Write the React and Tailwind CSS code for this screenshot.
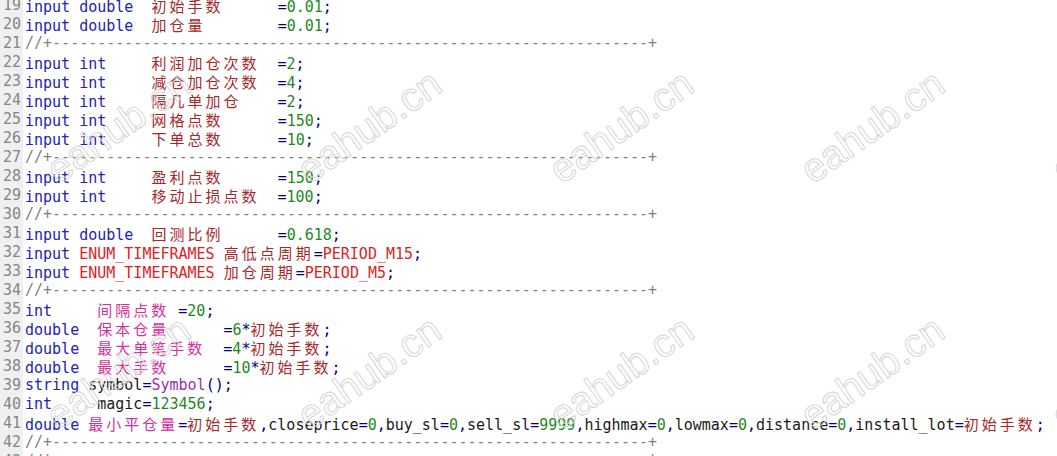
import React from 'react';

// token colours of the MetaEditor scheme
const C = {
  kw: 'text-[#2323b5]',
  op: 'text-[#000080]',
  num: 'text-[#1e8a1e]',
  vr: 'text-[#a8282a]',
  mg: 'text-[#d62fa0]',
  en: 'text-[#e01e1e]',
  fn: 'text-[#9a2fb2]',
  id: 'text-[#1a1a1a]',
  cm: 'text-[#808080]',
};

const SEP = ['cm', '//+' + '-'.repeat(66) + '+'];

const lines = [
  [19, [['kw', 'input'], ['id', ' '], ['kw', 'double'], ['id', '  '], ['vr', '初始手数'], ['id', '      '], ['op', '='], ['num', '0.01'], ['op', ';']]],
  [20, [['kw', 'input'], ['id', ' '], ['kw', 'double'], ['id', '  '], ['vr', '加仓量'], ['id', '        '], ['op', '='], ['num', '0.01'], ['op', ';']]],
  [21, [SEP]],
  [22, [['kw', 'input'], ['id', ' '], ['kw', 'int'], ['id', '     '], ['vr', '利润加仓次数'], ['id', '  '], ['op', '='], ['num', '2'], ['op', ';']]],
  [23, [['kw', 'input'], ['id', ' '], ['kw', 'int'], ['id', '     '], ['vr', '减仓加仓次数'], ['id', '  '], ['op', '='], ['num', '4'], ['op', ';']]],
  [24, [['kw', 'input'], ['id', ' '], ['kw', 'int'], ['id', '     '], ['vr', '隔几单加仓'], ['id', '    '], ['op', '='], ['num', '2'], ['op', ';']]],
  [25, [['kw', 'input'], ['id', ' '], ['kw', 'int'], ['id', '     '], ['vr', '网格点数'], ['id', '      '], ['op', '='], ['num', '150'], ['op', ';']]],
  [26, [['kw', 'input'], ['id', ' '], ['kw', 'int'], ['id', '     '], ['vr', '下单总数'], ['id', '      '], ['op', '='], ['num', '10'], ['op', ';']]],
  [27, [SEP]],
  [28, [['kw', 'input'], ['id', ' '], ['kw', 'int'], ['id', '     '], ['vr', '盈利点数'], ['id', '      '], ['op', '='], ['num', '150'], ['op', ';']]],
  [29, [['kw', 'input'], ['id', ' '], ['kw', 'int'], ['id', '     '], ['vr', '移动止损点数'], ['id', '  '], ['op', '='], ['num', '100'], ['op', ';']]],
  [30, [SEP]],
  [31, [['kw', 'input'], ['id', ' '], ['kw', 'double'], ['id', '  '], ['vr', '回测比例'], ['id', '      '], ['op', '='], ['num', '0.618'], ['op', ';']]],
  [32, [['kw', 'input'], ['id', ' '], ['en', 'ENUM_TIMEFRAMES'], ['id', ' '], ['vr', '高低点周期'], ['op', '='], ['en', 'PERIOD_M15'], ['op', ';']]],
  [33, [['kw', 'input'], ['id', ' '], ['en', 'ENUM_TIMEFRAMES'], ['id', ' '], ['vr', '加仓周期'], ['op', '='], ['en', 'PERIOD_M5'], ['op', ';']]],
  [34, [SEP]],
  [35, [['kw', 'int'], ['id', '     '], ['mg', '间隔点数'], ['id', ' '], ['op', '='], ['num', '20'], ['op', ';']]],
  [36, [['kw', 'double'], ['id', '  '], ['mg', '保本仓量'], ['id', '      '], ['op', '='], ['num', '6'], ['op', '*'], ['vr', '初始手数'], ['op', ';']]],
  [37, [['kw', 'double'], ['id', '  '], ['mg', '最大单笔手数'], ['id', '  '], ['op', '='], ['num', '4'], ['op', '*'], ['vr', '初始手数'], ['op', ';']]],
  [38, [['kw', 'double'], ['id', '  '], ['mg', '最大手数'], ['id', '      '], ['op', '='], ['num', '10'], ['op', '*'], ['vr', '初始手数'], ['op', ';']]],
  [39, [['kw', 'string'], ['id', ' symbol'], ['op', '='], ['fn', 'Symbol'], ['op', '();']]],
  [40, [['kw', 'int'], ['id', '     magic'], ['op', '='], ['num', '123456'], ['op', ';']]],
  [41, [
    ['kw', 'double'], ['id', ' '], ['mg', '最小平仓量'], ['op', '='], ['vr', '初始手数'],
    ['op', ','], ['id', 'closeprice'], ['op', '='], ['num', '0'],
    ['op', ','], ['id', 'buy_sl'], ['op', '='], ['num', '0'],
    ['op', ','], ['id', 'sell_sl'], ['op', '='], ['num', '9999'],
    ['op', ','], ['id', 'highmax'], ['op', '='], ['num', '0'],
    ['op', ','], ['id', 'lowmax'], ['op', '='], ['num', '0'],
    ['op', ','], ['id', 'distance'], ['op', '='], ['num', '0'],
    ['op', ','], ['id', 'install_lot'], ['op', '='], ['vr', '初始手数'], ['op', ';'],
  ]],
  [42, [SEP]],
  [43, [['cm', '//|' + ' '.repeat(66) + '|']]],
];

// CJK runs get a fixed two-column advance (15px glyph + 3px tracking)
function Run({ text }) {
  const parts = text.split(/([\u3400-\u9fff]+)/).filter(Boolean);
  return parts.map((p, i) =>
    /[\u3400-\u9fff]/.test(p) ? (
      <span key={i} className="font-['Noto_Sans_CJK_SC',sans-serif] text-[15px] tracking-[3px]">{p}</span>
    ) : (
      <span key={i}>{p}</span>
    )
  );
}

const marks = [
  [118, 126], [369, 126], [621, 126], [872, 126], [1123, 126],
  [118, 372], [369, 372], [621, 372], [872, 372], [1123, 372],
];

export default function App() {
  return (
    <div className="relative h-[456px] w-[1057px] overflow-hidden bg-white font-['DejaVu_Sans_Mono','Noto_Sans_CJK_SC',monospace] text-[15px] leading-[19px]">
      <div className="-mt-[4px] flex flex-col">
        {lines.map(([n, toks]) => (
          <div key={n} className="flex h-[19px] whitespace-pre">
            <div className="w-[23px] shrink-0 bg-[#f0f0f0] pr-[2px] text-right text-[#858585]">{n}</div>
            <div className="pl-[2px]">
              {toks.map(([c, t], i) => (
                <span key={i} className={C[c]}><Run text={t} /></span>
              ))}
            </div>
          </div>
        ))}
        <div className="h-[40px] w-[23px] bg-[#f0f0f0]" />
      </div>

      {/* site watermark */}
      {marks.map(([x, y]) => (
        <span
          key={x + '-' + y}
          className="pointer-events-none absolute -translate-x-1/2 -translate-y-1/2 -rotate-[35deg] whitespace-nowrap font-['Liberation_Sans',Arial,sans-serif] text-[40px] leading-none text-transparent [-webkit-text-stroke:1px_#d6d6d6]"
          style={{ left: x, top: y }}
        >
          eahub.cn
        </span>
      ))}
    </div>
  );
}
